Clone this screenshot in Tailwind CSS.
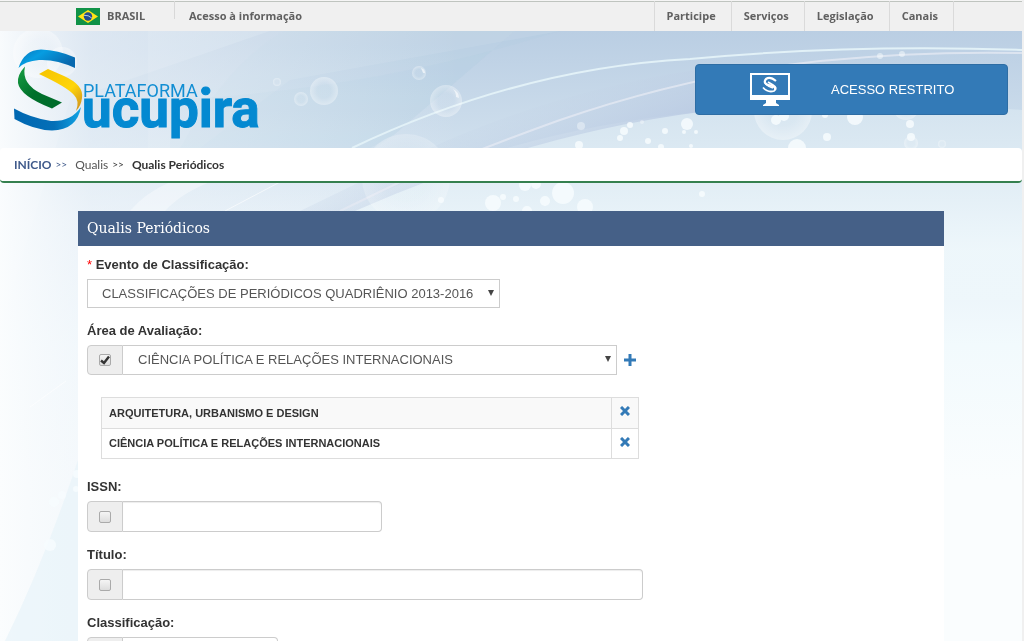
<!DOCTYPE html>
<html lang="pt-BR">
<head>
<meta charset="utf-8">
<meta name="viewport" content="width=device-width, initial-scale=1">
<title>Plataforma Sucupira - Qualis Periódicos</title>
<script src="https://cdn.jsdelivr.net/npm/@tailwindcss/browser@4"></script>
</head>
<body class="h-screen overflow-hidden bg-[#f0f0f0] font-['Liberation_Sans',sans-serif] text-[#333]">
<div class="relative isolate mr-[2px] min-h-screen overflow-hidden bg-[#fafdfe]">

  <!-- Decorative backdrop -->
  <svg class="absolute inset-x-0 top-0 -z-10 h-[641px] w-full" viewBox="0 0 1022 641" preserveAspectRatio="xMidYMin slice" aria-hidden="true">
    <defs>
      <linearGradient id="sky" x1="0" y1="31" x2="0" y2="480" gradientUnits="userSpaceOnUse">
        <stop offset="0" stop-color="#bacee3"/><stop offset=".25" stop-color="#cfdfed"/><stop offset=".42" stop-color="#e5eff7"/><stop offset=".7" stop-color="#f2fafd"/><stop offset="1" stop-color="#fafdfe"/>
      </linearGradient>
      <linearGradient id="fade" x1="0" y1="0" x2="460" y2="0" gradientUnits="userSpaceOnUse">
        <stop offset="0" stop-color="#fbfdfe" stop-opacity=".95"/><stop offset=".2" stop-color="#f0f5fa" stop-opacity=".55"/><stop offset="1" stop-color="#eef5fa" stop-opacity="0"/>
      </linearGradient>
      <linearGradient id="under" x1="0" y1="110" x2="0" y2="250" gradientUnits="userSpaceOnUse">
        <stop offset="0" stop-color="#d6e5f0"/><stop offset="1" stop-color="#eef7fb"/>
      </linearGradient>
      <linearGradient id="band" x1="560" y1="70" x2="590" y2="150" gradientUnits="userSpaceOnUse">
        <stop offset="0" stop-color="#c9d9e9" stop-opacity="0"/><stop offset="1" stop-color="#b9c9e2"/>
      </linearGradient>
      <radialGradient id="bub"><stop offset=".5" stop-color="#fff" stop-opacity=".08"/><stop offset="1" stop-color="#fff" stop-opacity=".36"/></radialGradient>
    </defs>
    <rect width="1022" height="641" fill="url(#sky)"/>
    <path d="M340 211Q510 130 700 112Q870 98 1022 110V300H340Z" fill="url(#under)" opacity=".9"/>
    <path d="M355 211Q530 134 700 112L695 70Q560 90 430 148L300 211Z" fill="url(#band)" opacity=".75"/>
    <path d="M0 31H270L70 100L0 330Z" fill="#fff" opacity=".15"/>
    <path d="M145 31H148V148H200L290 80L560 31Z" fill="#fff" opacity=".1"/>
    <path d="M180 148Q230 60 285 31H515L395 134L375 148Z" fill="#b6d1e1" opacity=".18"/>
    <path d="M170 100Q370 90 560 31H515L395 134L370 148H170Z" fill="#afcfdf" opacity=".2"/>
    <rect width="460" height="641" fill="url(#fade)"/>
    <path d="M0 641H78V460Q45 560 5 641Z" fill="#e8f3f9" opacity=".7"/>
    <path d="M130 211Q145 193 170 182H210Q180 194 165 211Z" fill="#fff" opacity=".35"/>
    <g fill="none">
      <path d="M352 148Q520 68 690 59Q850 44 1022 50" stroke="#e2f1f7" stroke-width="2"/>
      <path d="M340 211L400 182Q490 145 560 120Q690 75 820 61Q920 51 1022 53" stroke="#e3e9f3" stroke-width="2" opacity=".8"/>
      <path d="M225 211L280 182M30 407L66 381" stroke="#fff" opacity=".6"/>
    </g>
    <g fill="url(#bub)">
      <circle cx="38" cy="53" r="25"/><circle cx="62" cy="62" r="15"/><circle cx="324" cy="91" r="14"/><circle cx="301" cy="99" r="7"/><circle cx="277" cy="82" r="4"/><circle cx="419" cy="73" r="7"/><circle cx="446" cy="101" r="16"/><circle cx="406" cy="178" r="44" opacity=".6"/><circle cx="783" cy="111" r="29"/><circle cx="906" cy="107" r="13"/><circle cx="911" cy="143" r="7"/><circle cx="942" cy="144" r="4"/>
    </g>
    <path d="M453 89q6 3 6 9l-3-1q0-5-3-8M421 68q4 1 4 5h-2z" fill="#fff" opacity=".6"/>
    <g fill="#f7fcfe" opacity=".85">
      <circle cx="581" cy="126" r="4" opacity=".5"/><circle cx="579" cy="145" r="4"/><circle cx="624" cy="131" r="4"/><circle cx="620" cy="138" r="3"/><circle cx="630" cy="125" r="3"/><circle cx="642" cy="122" r="2" opacity=".5"/><circle cx="648" cy="141" r="3"/><circle cx="665" cy="131" r="3"/><circle cx="661" cy="147" r="3"/><circle cx="687" cy="124" r="6"/><circle cx="684" cy="132" r="2"/><circle cx="696" cy="132" r="2"/><circle cx="691" cy="146" r="2"/><circle cx="776" cy="120" r="5"/><circle cx="784" cy="116" r="5"/><circle cx="797" cy="148" r="9"/><circle cx="827" cy="137" r="4"/><circle cx="855" cy="117" r="8"/><circle cx="825" cy="115" r="3"/><circle cx="910" cy="124" r="4"/><circle cx="911" cy="137" r="4"/><circle cx="880" cy="56" r="3" opacity=".6"/><circle cx="902" cy="54" r="3" opacity=".6"/>
      <circle cx="441" cy="200" r="3"/><circle cx="493" cy="203" r="8"/><circle cx="503" cy="197" r="3"/><circle cx="516" cy="199" r="3"/><circle cx="525" cy="185" r="6"/><circle cx="536" cy="184" r="5"/><circle cx="545" cy="201" r="5"/><circle cx="563" cy="193" r="11"/><circle cx="585" cy="207" r="8"/><circle cx="527" cy="211" r="5"/><circle cx="702" cy="194" r="3"/>
      <circle cx="77" cy="474" r="4"/><circle cx="76" cy="489" r="3"/><circle cx="54" cy="502" r="5"/><circle cx="62" cy="495" r="4"/><circle cx="50" cy="545" r="6"/>
    </g>
  </svg>

  <!-- Government bar -->
  <nav class="-mr-[2px] flex h-[31px] items-stretch border-t border-[#f5f5f5] bg-[#f0f0f0] pr-[70px] pl-[76px] font-['Open_Sans',sans-serif] text-[11px] font-bold text-[#606060] shadow-[inset_0_1px_0_#bfc4bf]" aria-label="Governo">
    <a href="#" class="flex w-[98px] items-center gap-[7px]">
      <svg class="h-[17px] w-6" viewBox="0 0 24 17" aria-hidden="true"><path fill="#109247" d="M0 0h24v17H0z"/><path fill="#ffe415" d="M12 2l10 6.500-10 6.500L2 8.500z"/><circle cx="12" cy="8.500" r="4.200" fill="#204b8f"/><path d="M8 7.300q4.500-.4 7.800 2.700" fill="none" stroke="#dbe8ef" stroke-width=".8"/></svg>
      BRASIL
    </a>
    <a href="#" class="flex items-center"><span class="mr-[14px] h-[18px] w-px self-start bg-[#d8d8d8]"></span>Acesso à informação</a>
    <div class="ml-auto flex divide-x divide-[#dadada] border-x border-[#dadada]">
      <a href="#" class="flex items-center pr-[15px] pl-3">Participe</a>
      <a href="#" class="flex items-center pr-[15px] pl-3">Serviços</a>
      <a href="#" class="flex items-center pr-[15px] pl-3">Legislação</a>
      <a href="#" class="flex items-center pr-[15px] pl-3">Canais</a>
    </div>
  </nav>

  <header class="flex h-[117px] items-start justify-between pr-[14px] pl-[13px]">
    <a href="#" class="mt-4" aria-label="Plataforma Sucupira">
      <svg class="h-[94px] w-[252px]" viewBox="13 47 252 94" font-family="Roboto, sans-serif">
        <defs>
          <linearGradient id="l1" x1="0" x2="1" y2=".5"><stop stop-color="#0873ba"/><stop offset=".4" stop-color="#069de1"/><stop offset="1" stop-color="#0868ae"/></linearGradient>
          <linearGradient id="l2" x1="0" x2="1"><stop stop-color="#0067b1"/><stop offset=".6" stop-color="#046fb7"/><stop offset="1" stop-color="#10a4e5"/></linearGradient>
          <linearGradient id="l3" x1="0" x2="1" y2="1"><stop stop-color="#19a044"/><stop offset=".5" stop-color="#00702b"/><stop offset="1" stop-color="#006b2b"/></linearGradient>
          <linearGradient id="l4" x1="0" x2="1" y2="1"><stop stop-color="#f5c400"/><stop offset=".6" stop-color="#ffd50a"/><stop offset="1" stop-color="#c98a20"/></linearGradient>
        </defs>
        <path d="M18.500 68Q24 50 41 49.500Q58 50 75 57.500V68Q56 59 39 60Q25 61 18.500 68Z" fill="url(#l1)"/>
        <path d="M25 66.500Q17 75 18 83Q20 96 52 108.500L62 102.500L42 94Q21 84 25 66.500Z" fill="url(#l3)"/>
        <path d="M39 74L48 69L64 76Q84 85 82 98Q81 106 76 111Q80 101 74 95Q67 87 39 74Z" fill="url(#l4)"/>
        <path d="M14 108.500Q31 118 51 121Q71 122 81 107Q77 130 52 130.500Q34 130 14.500 119Z" fill="url(#l2)"/>
        <text x="83" y="97" font-size="18" font-weight="400" fill="#128ed3">PLATAFORMA</text>
        <text x="82" y="127" font-size="53" font-weight="700" fill="#0489d1" stroke="#0489d1">ucupira</text>
      </svg>
    </a>
    <button type="button" class="mt-[33px] flex h-[51px] w-[313px] items-center rounded border border-[#2e6da4] bg-[#337ab7] pl-[54px] text-[13px] text-white">
      <svg class="mr-[41px] h-[33px] w-10" viewBox="0 0 40 33" aria-hidden="true"><path d="M0 0h40v27H26v3l3 2v1H13v-1l3-2v-3H0zM2 2v20h36V2z" fill="#fff" fill-rule="evenodd"/><g fill="none" stroke="#fff"><path d="M26 8Q20 3 16 6Q12 11 21 12.500Q26 14 25 17" stroke-width="2.200"/><path d="M15 8Q14 12 23 15M13 14.500Q18 20 24 18Q28 15 23 12L18 9" stroke-width="1.800"/></g></svg>
      ACESSO RESTRITO
    </button>
  </header>

  <nav class="flex h-[35px] items-center rounded border-b-2 border-[#35804f] bg-white pl-[14px] font-['Lato',sans-serif] text-[12px] text-[#333]" aria-label="Trilha">
    <a href="#" class="font-bold text-[#3e598a]">INÍCIO</a>
    <span class="mr-2 ml-1 text-[10px] text-[#3e598a]">&gt;&gt;</span>
    <a href="#" class="text-[#555]">Qualis</a>
    <span class="mr-2 ml-1 text-[10px]">&gt;&gt;</span>
    <span class="font-bold">Qualis Periódicos</span>
  </nav>

  <main class="mx-[78px] mt-7 min-h-[460px] bg-white">
    <h1 class="flex h-[35px] items-center bg-[#456087] pl-[9px] font-['Roboto_Slab','DejaVu_Serif',serif] text-[14px] text-white">Qualis Periódicos</h1>
    <form class="flex flex-col items-start pl-[9px] text-[13px]">
      <label for="evento" class="mt-2 h-[25px] leading-[22px] font-bold"><span class="font-normal text-[#f00]">*</span> Evento de Classificação:</label>
      <div class="relative w-[413px] max-w-full">
        <select id="evento" class="h-[29px] w-full appearance-none border border-[#ccc] bg-white pl-[14px] text-[13px] text-[#555]"><option>CLASSIFICAÇÕES DE PERIÓDICOS QUADRIÊNIO 2013-2016</option></select>
        <svg class="pointer-events-none absolute top-[11px] right-[6px] h-[6px] w-[6px]" viewBox="0 0 6 6" aria-hidden="true"><path d="M0 0h6L3 6z" fill="#444"/></svg>
      </div>

      <label for="area" class="mt-3 h-[25px] leading-[22px] font-bold">Área de Avaliação:</label>
      <div class="flex items-center">
        <div class="flex h-[30px] w-[530px]">
          <span class="flex w-9 items-center justify-center rounded-l border border-[#ccc] bg-[#eee]">
            <input type="checkbox" checked aria-label="Filtrar por área de avaliação" class="size-3 appearance-none rounded-[2px] border border-[#aaa] bg-linear-to-b from-[#f5f5f5] to-[#ddd]">
            <svg class="pointer-events-none mr-px -ml-[11px] size-[10px]" viewBox="0 0 10 10" aria-hidden="true"><path d="M1 5.500L4 8L9 1.500" fill="none" stroke="#333" stroke-width="2.400"/></svg>
          </span>
          <span class="relative flex-1">
            <select id="area" class="h-full w-full appearance-none border border-l-0 border-[#ccc] bg-white pl-[15px] text-[13px] text-[#555]"><option>CIÊNCIA POLÍTICA E RELAÇÕES INTERNACIONAIS</option></select>
            <svg class="pointer-events-none absolute top-[11px] right-[6px] h-[6px] w-[6px]" viewBox="0 0 6 6" aria-hidden="true"><path d="M0 0h6L3 6z" fill="#444"/></svg>
          </span>
        </div>
        <button type="button" class="ml-[7px]" aria-label="Adicionar"><svg class="size-3" viewBox="0 0 12 12"><path d="M6 0v12M0 6h12" stroke="#337ab7" stroke-width="3"/></svg></button>
      </div>

      <table class="mt-[22px] ml-[14px] w-[538px] border-collapse text-[11px] font-bold">
        <tbody>
        <tr class="h-[31px] bg-[#f9f9f9]">
          <td class="border border-[#ddd] px-[7px]">ARQUITETURA, URBANISMO E DESIGN</td>
          <td class="w-[27px] border border-[#ddd]"><button type="button" class="mx-auto mb-1 block" aria-label="Remover"><svg class="size-[10px]" viewBox="0 0 10 10"><path d="M1 1l8 8M9 1L1 9" stroke="#337ab7" stroke-width="3"/></svg></button></td>
        </tr>
        <tr class="h-[30px]">
          <td class="border border-[#ddd] px-[7px]">CIÊNCIA POLÍTICA E RELAÇÕES INTERNACIONAIS</td>
          <td class="w-[27px] border border-[#ddd]"><button type="button" class="mx-auto mb-1 block" aria-label="Remover"><svg class="size-[10px]" viewBox="0 0 10 10"><path d="M1 1l8 8M9 1L1 9" stroke="#337ab7" stroke-width="3"/></svg></button></td>
        </tr>
        </tbody>
      </table>

      <label for="issn" class="mt-[17px] h-[25px] leading-[22px] font-bold">ISSN:</label>
      <div class="flex h-[31px] w-[295px]">
        <span class="flex w-9 items-center justify-center rounded-l border border-[#ccc] bg-[#eee]"><input type="checkbox" aria-label="Filtrar por ISSN" class="size-3 appearance-none rounded-[2px] border border-[#aaa] bg-linear-to-b from-[#f5f5f5] to-[#ddd]"></span>
        <input id="issn" type="text" class="min-w-0 flex-1 rounded-r border border-l-0 border-[#ccc] bg-white px-3 shadow-[inset_0_1px_1px_#00000013]">
      </div>

      <label for="titulo" class="mt-3 h-[25px] leading-[22px] font-bold">Título:</label>
      <div class="flex h-[31px] w-[556px]">
        <span class="flex w-9 items-center justify-center rounded-l border border-[#ccc] bg-[#eee]"><input type="checkbox" aria-label="Filtrar por título" class="size-3 appearance-none rounded-[2px] border border-[#aaa] bg-linear-to-b from-[#f5f5f5] to-[#ddd]"></span>
        <input id="titulo" type="text" class="min-w-0 flex-1 rounded-r border border-l-0 border-[#ccc] bg-white px-3 shadow-[inset_0_1px_1px_#00000013]">
      </div>

      <label for="classificacao" class="mt-3 h-[25px] leading-[22px] font-bold">Classificação:</label>
      <div class="flex h-[31px] w-[191px]">
        <span class="flex w-9 items-center justify-center rounded-l border border-[#ccc] bg-[#eee]"><input type="checkbox" aria-label="Filtrar por classificação" class="size-3 appearance-none rounded-[2px] border border-[#aaa] bg-linear-to-b from-[#f5f5f5] to-[#ddd]"></span>
        <select id="classificacao" class="min-w-0 flex-1 appearance-none rounded-r border border-l-0 border-[#ccc] bg-white px-3"><option></option></select>
      </div>
    </form>
  </main>
</div>
</body>
</html>
